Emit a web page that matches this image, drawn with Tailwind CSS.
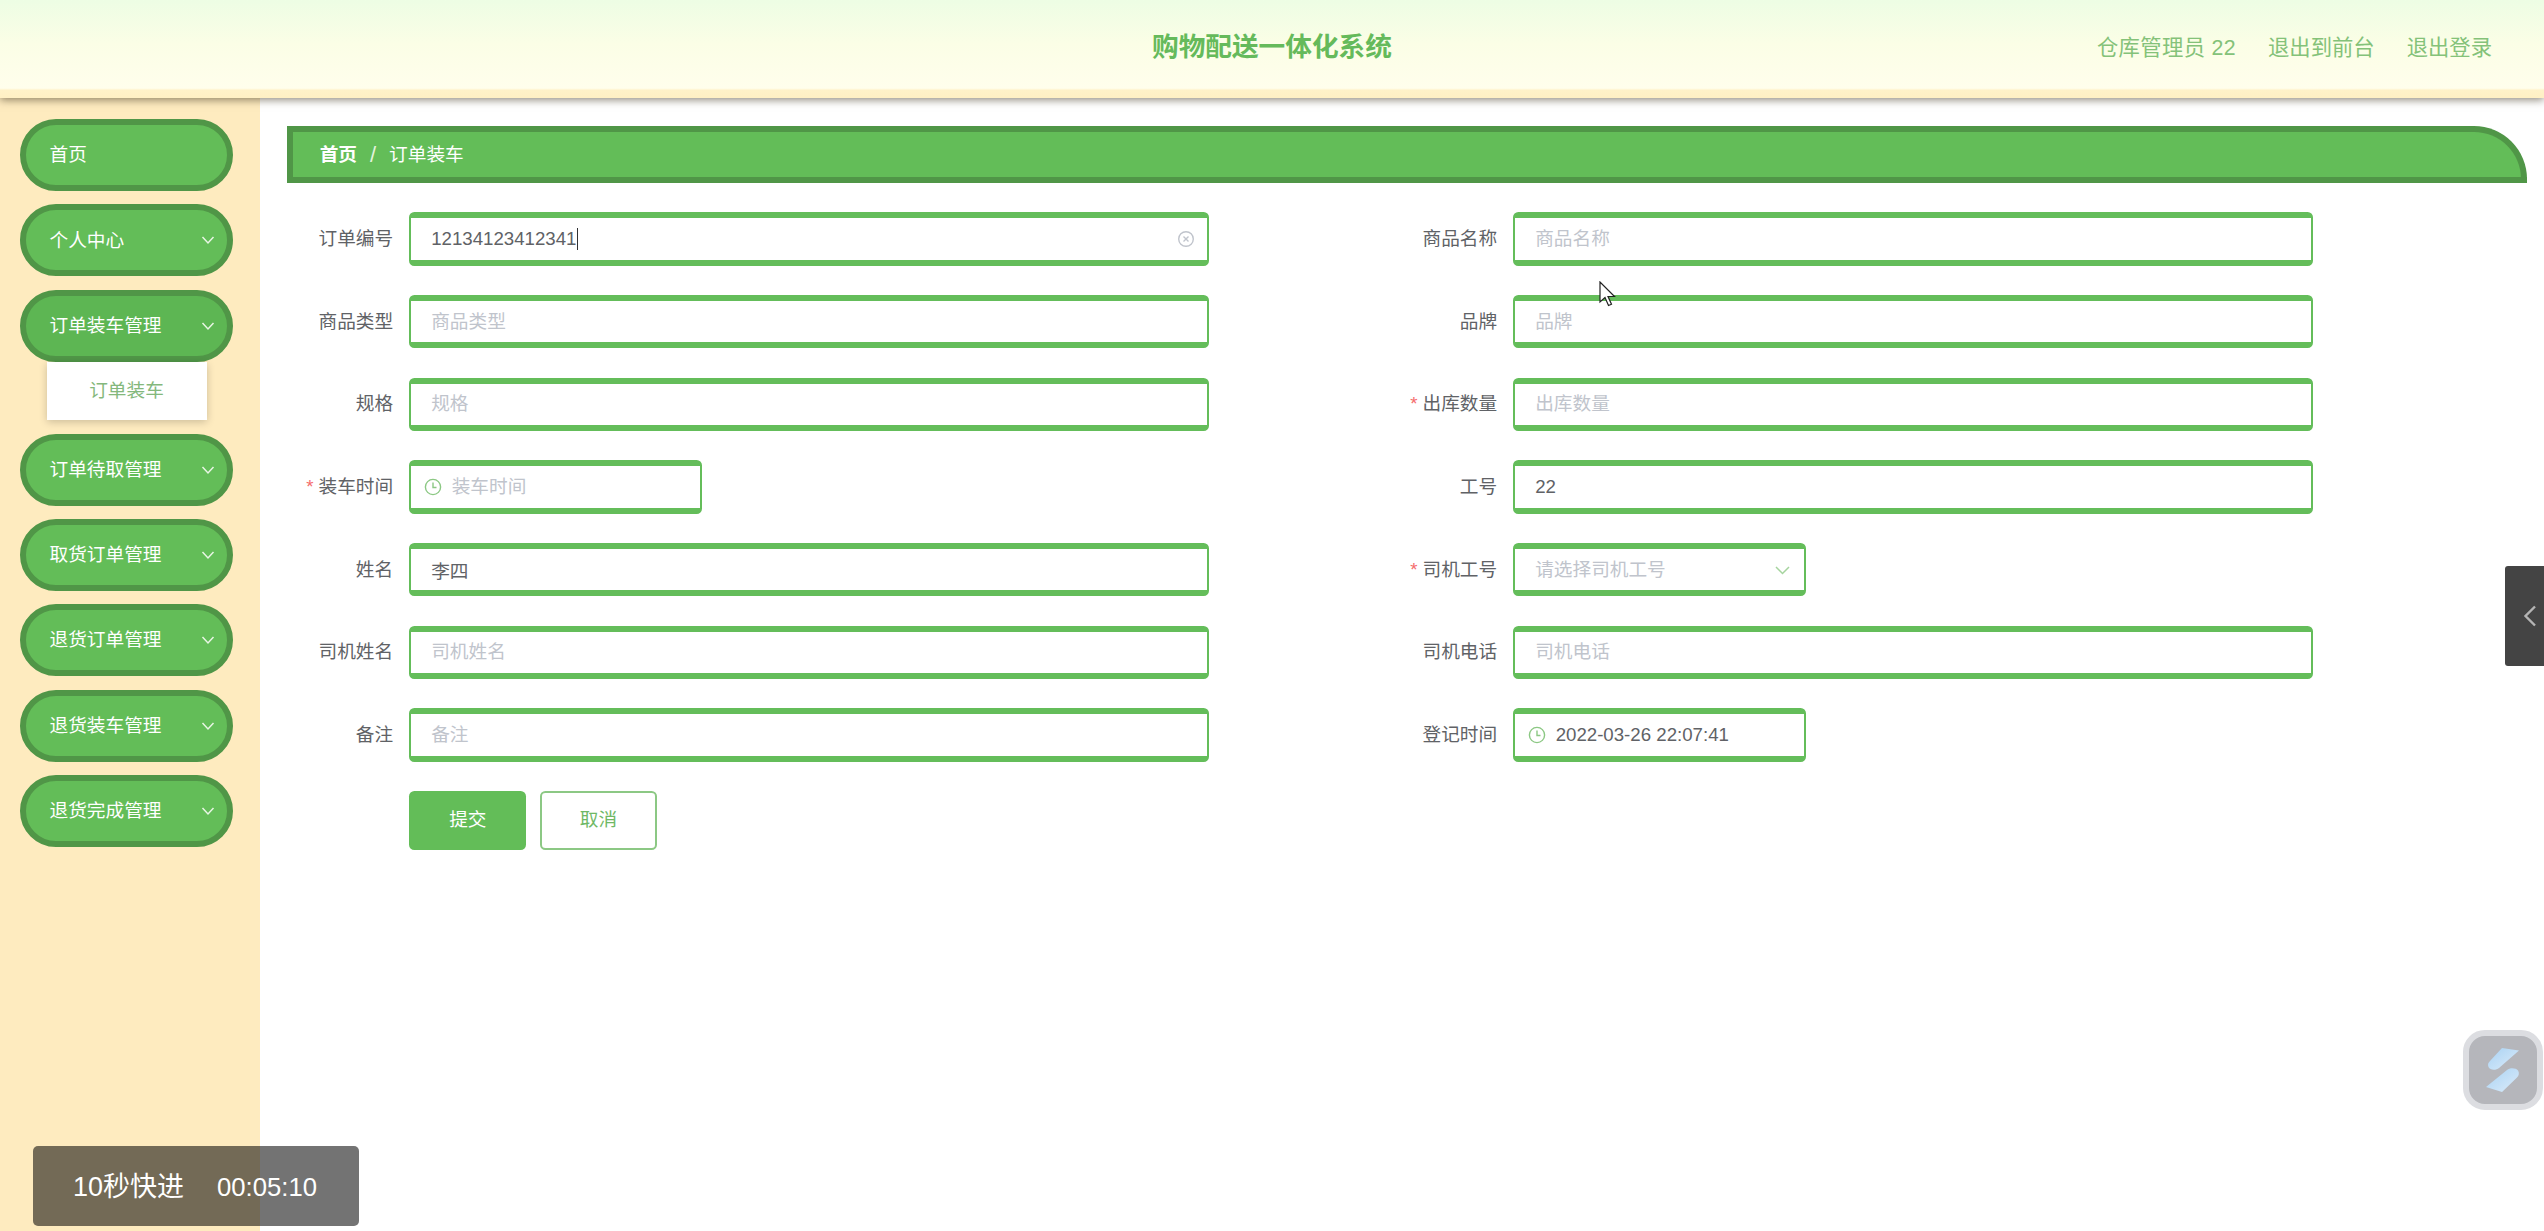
<!DOCTYPE html>
<html lang="zh-CN">
<head>
  <meta charset="UTF-8">
  <meta name="viewport" content="width=device-width, initial-scale=1.0">
  <title>购物配送一体化系统</title>
  <script src="https://cdn.jsdelivr.net/npm/@tailwindcss/browser@4"></script>
</head>
<body class="relative h-[1231px] w-[2544px] overflow-hidden bg-white font-['Liberation_Sans','Noto_Sans_CJK_SC',sans-serif] text-[18.67px] text-[#606266]">
  <!-- top bar -->
  <header class="relative z-10 flex h-[98px] items-center bg-[linear-gradient(180deg,#edfde4_0%,#fbfee6_45%,#fffeec_90%,#fff2c9_92%,#fff0c4_100%)] shadow-[0_2px_8px_rgba(70,60,40,0.6)]">
    <h1 class="absolute left-[1152px] top-[28px] text-[26.67px] leading-[38px] font-bold text-[#65ba5b]">购物配送一体化系统</h1>
    <div class="ml-auto flex gap-[32px] pr-[52px] text-[21.33px] text-[#84c279]">
      <span class="tracking-[0.35px]">仓库管理员 22</span>
      <span>退出到前台</span>
      <span>退出登录</span>
    </div>
  </header>

  <div class="flex h-[1133px]">
    <!-- side menu -->
    <aside class="w-[260px] shrink-0 bg-[#feebbf] pt-[21px] pl-[19.5px]">
      <div class="mb-[13.33px] flex h-[72px] w-[213.33px] items-center rounded-[36px] border-[6.67px] border-[#509647] bg-[#63bd58] pl-[24px] pr-[12px] text-white">首页</div>
      <div class="mb-[13.33px] flex h-[72px] w-[213.33px] items-center justify-between rounded-[36px] border-[6.67px] border-[#509647] bg-[#63bd58] pl-[24px] pr-[12px] text-white">
        <span class="pt-[1px]">个人中心</span>
        <svg class="h-[10px] w-[14px]" viewBox="0 0 14 10" fill="none" stroke="#e8f5e4" stroke-width="1.5"><path d="M1.5 2l5.500 6 5.500-6"/></svg>
      </div>
      <div class="flex h-[72px] w-[213.33px] items-center justify-between rounded-[36px] border-[6.67px] border-[#509647] bg-[#5db653] pl-[24px] pr-[12px] text-white">
        <span>订单装车管理</span>
        <svg class="h-[10px] w-[14px]" viewBox="0 0 14 10" fill="none" stroke="#e8f5e4" stroke-width="1.5"><path d="M1.5 2l5.500 6 5.500-6"/></svg>
      </div>
      <div class="mb-[13.33px] ml-[27px] flex h-[58.67px] w-[160px] items-center justify-center bg-white text-[#84b87c] shadow-[0_2px_8px_rgba(0,0,0,0.2)]">订单装车</div>
      <div class="mb-[13.33px] flex h-[72px] w-[213.33px] items-center justify-between rounded-[36px] border-[6.67px] border-[#509647] bg-[#63bd58] pl-[24px] pr-[12px] text-white">
        <span>订单待取管理</span>
        <svg class="h-[10px] w-[14px]" viewBox="0 0 14 10" fill="none" stroke="#e8f5e4" stroke-width="1.5"><path d="M1.5 2l5.500 6 5.500-6"/></svg>
      </div>
      <div class="mb-[13.33px] flex h-[72px] w-[213.33px] items-center justify-between rounded-[36px] border-[6.67px] border-[#509647] bg-[#63bd58] pl-[24px] pr-[12px] text-white">
        <span>取货订单管理</span>
        <svg class="h-[10px] w-[14px]" viewBox="0 0 14 10" fill="none" stroke="#e8f5e4" stroke-width="1.5"><path d="M1.5 2l5.500 6 5.500-6"/></svg>
      </div>
      <div class="mb-[13.33px] flex h-[72px] w-[213.33px] items-center justify-between rounded-[36px] border-[6.67px] border-[#509647] bg-[#63bd58] pl-[24px] pr-[12px] text-white">
        <span>退货订单管理</span>
        <svg class="h-[10px] w-[14px]" viewBox="0 0 14 10" fill="none" stroke="#e8f5e4" stroke-width="1.5"><path d="M1.5 2l5.500 6 5.500-6"/></svg>
      </div>
      <div class="mb-[13.33px] flex h-[72px] w-[213.33px] items-center justify-between rounded-[36px] border-[6.67px] border-[#509647] bg-[#63bd58] pl-[24px] pr-[12px] text-white">
        <span>退货装车管理</span>
        <svg class="h-[10px] w-[14px]" viewBox="0 0 14 10" fill="none" stroke="#e8f5e4" stroke-width="1.5"><path d="M1.5 2l5.500 6 5.500-6"/></svg>
      </div>
      <div class="flex h-[72px] w-[213.33px] items-center justify-between rounded-[36px] border-[6.67px] border-[#509647] bg-[#63bd58] pl-[24px] pr-[12px] text-white">
        <span>退货完成管理</span>
        <svg class="h-[10px] w-[14px]" viewBox="0 0 14 10" fill="none" stroke="#e8f5e4" stroke-width="1.5"><path d="M1.5 2l5.500 6 5.500-6"/></svg>
      </div>
    </aside>

    <main class="flex-1 pt-[27.67px] pl-[26.67px] pr-[17.33px]">
      <!-- breadcrumb -->
      <div class="flex h-[57.33px] items-center rounded-tr-[53px] border-[6.67px] border-[#509647] bg-[#63bd58] pl-[27px] pt-[2px] text-white">
        <span class="font-semibold">首页</span>
        <span class="mx-[13px] text-[22px] leading-none text-[#e4f3df]">/</span>
        <span>订单装车</span>
      </div>

      <!-- form -->
      <form class="mt-[29.33px] ml-[15.5px] grid grid-cols-[1104px_1104px] gap-y-[29.33px]">
        <div class="flex items-center">
          <label class="w-[107px] pr-[16px] text-right">订单编号</label>
          <div class="flex h-[53.33px] w-[800px] items-center rounded-[5.33px] border-x-[2.67px] border-y-[6.67px] border-[#64bd5a] bg-white pl-[20px] pr-[12px]">
            <span>12134123412341</span>
            <span class="ml-[1px] h-[22px] w-[1px] bg-[#303133]"></span>
            <svg class="ml-auto h-[18px] w-[18px]" viewBox="0 0 18 18" fill="none" stroke="#c0c4cc" stroke-width="1.4"><circle cx="9" cy="9" r="7.3"/><path d="M6.500 6.500l5 5M11.500 6.500l-5 5"/></svg>
          </div>
        </div>
        <div class="flex items-center">
          <label class="w-[107px] pr-[16px] text-right">商品名称</label>
          <input class="h-[53.33px] w-[800px] rounded-[5.33px] border-x-[2.67px] border-y-[6.67px] border-[#64bd5a] bg-white px-[20px] outline-none placeholder:text-[#c0c4cc]" placeholder="商品名称">
        </div>

        <div class="flex items-center">
          <label class="w-[107px] pr-[16px] text-right">商品类型</label>
          <input class="h-[53.33px] w-[800px] rounded-[5.33px] border-x-[2.67px] border-y-[6.67px] border-[#64bd5a] bg-white px-[20px] outline-none placeholder:text-[#c0c4cc]" placeholder="商品类型">
        </div>
        <div class="flex items-center">
          <label class="w-[107px] pr-[16px] text-right">品牌</label>
          <input class="h-[53.33px] w-[800px] rounded-[5.33px] border-x-[2.67px] border-y-[6.67px] border-[#64bd5a] bg-white px-[20px] outline-none placeholder:text-[#c0c4cc]" placeholder="品牌">
        </div>

        <div class="flex items-center">
          <label class="w-[107px] pr-[16px] text-right">规格</label>
          <input class="h-[53.33px] w-[800px] rounded-[5.33px] border-x-[2.67px] border-y-[6.67px] border-[#64bd5a] bg-white px-[20px] outline-none placeholder:text-[#c0c4cc]" placeholder="规格">
        </div>
        <div class="flex items-center">
          <label class="w-[107px] pr-[16px] text-right"><span class="mr-[5px] text-[#f56c6c]">*</span>出库数量</label>
          <input class="h-[53.33px] w-[800px] rounded-[5.33px] border-x-[2.67px] border-y-[6.67px] border-[#64bd5a] bg-white px-[20px] outline-none placeholder:text-[#c0c4cc]" placeholder="出库数量">
        </div>

        <div class="flex items-center">
          <label class="w-[107px] pr-[16px] text-right"><span class="mr-[5px] text-[#f56c6c]">*</span>装车时间</label>
          <div class="flex h-[53.33px] w-[293.33px] items-center gap-[9.5px] rounded-[5.33px] border-x-[2.67px] border-y-[6.67px] border-[#64bd5a] bg-white pl-[13px]">
            <svg class="h-[18px] w-[18px]" viewBox="0 0 18 18" fill="none" stroke="#8cc884" stroke-width="1.4"><circle cx="9" cy="9" r="7.6"/><path d="M9 4.500V9.500h3.500"/></svg>
            <span class="text-[#c0c4cc]">装车时间</span>
          </div>
        </div>
        <div class="flex items-center">
          <label class="w-[107px] pr-[16px] text-right">工号</label>
          <input class="h-[53.33px] w-[800px] rounded-[5.33px] border-x-[2.67px] border-y-[6.67px] border-[#64bd5a] bg-white px-[20px] outline-none" value="22">
        </div>

        <div class="flex items-center">
          <label class="w-[107px] pr-[16px] text-right">姓名</label>
          <input class="h-[53.33px] w-[800px] rounded-[5.33px] border-x-[2.67px] border-y-[6.67px] border-[#64bd5a] bg-white px-[20px] outline-none" value="李四">
        </div>
        <div class="flex items-center">
          <label class="w-[107px] pr-[16px] text-right"><span class="mr-[5px] text-[#f56c6c]">*</span>司机工号</label>
          <div class="flex h-[53.33px] w-[293.33px] items-center justify-between rounded-[5.33px] border-x-[2.67px] border-y-[6.67px] border-[#64bd5a] bg-white pl-[20px] pr-[14px]">
            <span class="text-[#c0c4cc]">请选择司机工号</span>
            <svg class="h-[10px] w-[15px]" viewBox="0 0 15 10" fill="none" stroke="#a5d49e" stroke-width="1.5"><path d="M1 2l6.500 6.500L14 2"/></svg>
          </div>
        </div>

        <div class="flex items-center">
          <label class="w-[107px] pr-[16px] text-right">司机姓名</label>
          <input class="h-[53.33px] w-[800px] rounded-[5.33px] border-x-[2.67px] border-y-[6.67px] border-[#64bd5a] bg-white px-[20px] outline-none placeholder:text-[#c0c4cc]" placeholder="司机姓名">
        </div>
        <div class="flex items-center">
          <label class="w-[107px] pr-[16px] text-right">司机电话</label>
          <input class="h-[53.33px] w-[800px] rounded-[5.33px] border-x-[2.67px] border-y-[6.67px] border-[#64bd5a] bg-white px-[20px] outline-none placeholder:text-[#c0c4cc]" placeholder="司机电话">
        </div>

        <div class="flex items-center">
          <label class="w-[107px] pr-[16px] text-right">备注</label>
          <input class="h-[53.33px] w-[800px] rounded-[5.33px] border-x-[2.67px] border-y-[6.67px] border-[#64bd5a] bg-white px-[20px] outline-none placeholder:text-[#c0c4cc]" placeholder="备注">
        </div>
        <div class="flex items-center">
          <label class="w-[107px] pr-[16px] text-right">登记时间</label>
          <div class="flex h-[53.33px] w-[293.33px] items-center gap-[9.5px] rounded-[5.33px] border-x-[2.67px] border-y-[6.67px] border-[#64bd5a] bg-white pl-[13px]">
            <svg class="h-[18px] w-[18px]" viewBox="0 0 18 18" fill="none" stroke="#8cc884" stroke-width="1.4"><circle cx="9" cy="9" r="7.6"/><path d="M9 4.500V9.500h3.500"/></svg>
            <span>2022-03-26 22:07:41</span>
          </div>
        </div>

        <div class="col-span-2 flex gap-[13.33px] pl-[107px]">
          <button type="button" class="h-[58.67px] w-[117.33px] rounded-[5.33px] bg-[#63bd58] text-white">提交</button>
          <button type="button" class="h-[58.67px] w-[117.33px] rounded-[5.33px] border-2 border-[#8cc884] bg-white text-[#6fb865]">取消</button>
        </div>
      </form>
    </main>
  </div>

  <!-- right edge tab -->
  <div class="absolute left-[2505px] top-[566px] flex h-[100px] w-[39px] items-center justify-center rounded-l-[3px] bg-[#444444]">
    <svg class="ml-[10px] h-[22px] w-[14px]" viewBox="0 0 14 22" fill="none" stroke="#b4b4b4" stroke-width="2.4"><path d="M12 1.500L2.500 11l9.500 9.500"/></svg>
  </div>

  <!-- floating logo button -->
  <div class="absolute left-[2463px] top-[1030px] flex h-[80px] w-[80px] items-center justify-center rounded-[22px] border-[6px] border-[#dcdde1] bg-[#b5b6bb]">
    <svg class="h-[46px] w-[36px]" viewBox="0 0 36 46">
      <defs>
        <linearGradient id="blade" x1="0" y1="0" x2="1" y2="1"><stop offset="0" stop-color="#a9d2f3"/><stop offset="1" stop-color="#dcecfa"/></linearGradient>
      </defs>
      <path d="M17 1l17 2.500L14 21c-3 2.500-9 2.500-10.500-1-1-2.500-.5-4 1.500-6z" fill="url(#blade)"/>
      <path d="M1 40l21-17c3-2.500 9-2 11 .5 1.500 2.500 1 5-1 7L17 45z" fill="url(#blade)"/>
    </svg>
  </div>

  <!-- playback toast -->
  <div class="absolute left-[33px] top-[1146px] flex h-[80px] w-[326px] items-center rounded-[5px] bg-black/55 pl-[40px] pt-[2px] text-white">
    <span class="text-[27px]">10秒快进</span>
    <span class="ml-[33px] text-[25.7px]">00:05:10</span>
  </div>

  <!-- mouse pointer -->
  <svg class="absolute left-[1599px] top-[281px] h-[27px] w-[17px]" viewBox="0 0 17 27">
    <path d="M1 1v20l5-4.500 3.500 8 3-1.300-3.500-7.700h6.500z" fill="#fff" stroke="#222" stroke-width="1.2"/>
  </svg>
</body>
</html>
